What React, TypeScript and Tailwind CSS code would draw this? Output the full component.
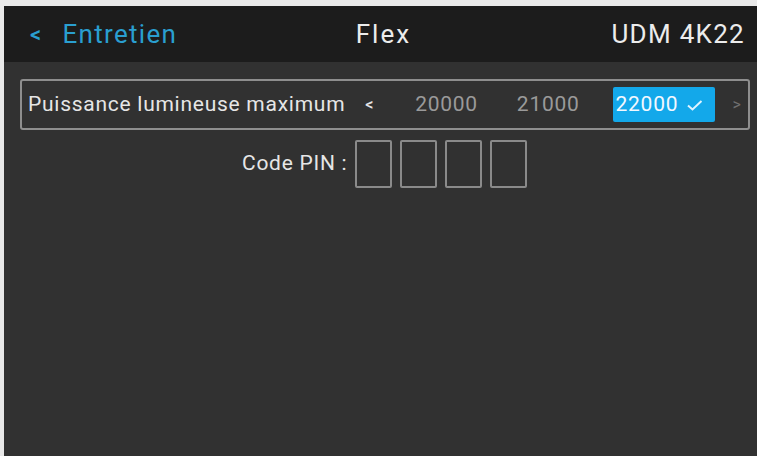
import React from "react";

export default function App() {
  const font = { fontFamily: "Roboto, 'Liberation Sans', sans-serif" };
  return (
    <div className="w-[757px] h-[456px] bg-[#e9e9e9] pt-[6px] pl-[4px] overflow-hidden" style={font}>
      <div className="w-full h-full bg-[#313131] flex flex-col">
        <div className="h-[56px] bg-[#1c1c1c] flex items-center relative pl-[26px] pr-[12px] text-[26px] tracking-[0.05em]">
          <div className="flex items-center text-[#2a9fd0]">
            <span className="text-[22px] font-medium mr-[20px]">&lt;</span>
            <span>Entretien</span>
          </div>
          <div className="absolute left-0 right-0 text-center text-[#ececec] pointer-events-none pl-[6px] tracking-[0.08em]">Flex</div>
          <div className="ml-auto text-[#ececec]">UDM 4K22</div>
        </div>
        <div className="pl-[16px] pr-[7px] pt-[17px]">
          <div className="h-[51px] border-2 border-[#8e8e8e] rounded-[3px] flex items-center pl-[6px] text-[21px] tracking-[0.035em] whitespace-nowrap overflow-hidden">
            <span className="text-[#e6e6e6] shrink-0">Puissance lumineuse maximum</span>
            <span className="text-[#e6e6e6] ml-[20px] text-[16px] font-medium shrink-0">&lt;</span>
            <span className="text-[#9a9a9a] ml-[41px] shrink-0">20000</span>
            <span className="text-[#9a9a9a] ml-[39px] shrink-0">21000</span>
            <span className="ml-[33px] h-[35px] w-[102px] shrink-0 bg-[#13a8ea] rounded-[2px] flex items-center pl-[3px] text-[#f2f8ff]">
              22000
              <svg width="18" height="14" viewBox="0 0 18 14" className="ml-[8px]">
                <path d="M2 7.5 L6.5 11.5 L15.5 3" stroke="#dff3ff" strokeWidth="2" fill="none" />
              </svg>
            </span>
            <span className="text-[#6f6f6f] ml-[18px] text-[16px] shrink-0">&gt;</span>
          </div>
          <div className="flex items-center mt-[10px] pl-[222px]">
            <span className="text-[#e6e6e6] text-[21px] tracking-[0.035em] mr-[8px] whitespace-nowrap">Code PIN :</span>
            <div className="flex gap-[8px]">
              <div className="w-[37px] h-[48px] border-2 border-[#8a8a8a] rounded-[2px]" />
              <div className="w-[37px] h-[48px] border-2 border-[#8a8a8a] rounded-[2px]" />
              <div className="w-[37px] h-[48px] border-2 border-[#8a8a8a] rounded-[2px]" />
              <div className="w-[37px] h-[48px] border-2 border-[#8a8a8a] rounded-[2px]" />
            </div>
          </div>
        </div>
      </div>
    </div>
  );
}
